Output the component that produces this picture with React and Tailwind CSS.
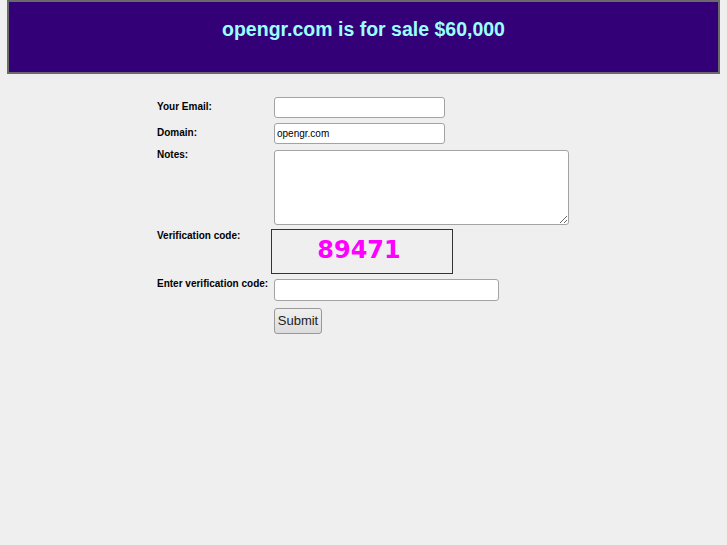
import { useState } from "react";

function Row({ label, labelClass = "pt-[2px]", children }) {
  return (
    <div className="flex">
      <div className={`w-[117px] shrink-0 text-[10px] font-bold text-black ${labelClass}`}>
        {label}
      </div>
      <div>{children}</div>
    </div>
  );
}

export default function App() {
  const [email, setEmail] = useState("");
  const [domain, setDomain] = useState("opengr.com");
  const [notes, setNotes] = useState("");
  const [code, setCode] = useState("");

  const inputCls =
    "block h-[21px] bg-white border border-[#a3a3a3] rounded-[3px] px-[2px] text-[10px] text-black outline-none";

  return (
    <div className="min-h-[545px] bg-[#efefef] font-['Liberation_Sans',Arial,sans-serif]">
      <div className="mx-[7px] h-[74px] border-2 border-[#6a6a6a] bg-[#330077] pt-[16px] text-center">
        <h1 className="text-[19.5px] leading-[22px] font-bold text-[#99ffff]">
          opengr.com is for sale $60,000
        </h1>
      </div>

      <form
        className="mx-auto mt-[23px] flex w-[413px] flex-col"
        onSubmit={(e) => e.preventDefault()}
      >
        <Row label="Your Email:" labelClass="pt-[2px]">
          <input
            className={`${inputCls} w-[171px]`}
            value={email}
            onChange={(e) => setEmail(e.target.value)}
          />
        </Row>
        <div className="h-[5px]" />
        <Row label="Domain:" labelClass="pt-[2px]">
          <input
            className={`${inputCls} w-[171px]`}
            value={domain}
            onChange={(e) => setDomain(e.target.value)}
          />
        </Row>
        <div className="h-[6px]" />
        <Row label="Notes:" labelClass="-mt-[3px]">
          <textarea
            className="block h-[75px] w-[295px] bg-white border border-[#a3a3a3] rounded-[3px] text-[10px] outline-none"
            value={notes}
            onChange={(e) => setNotes(e.target.value)}
          />
        </Row>
        <div className="h-[4px]" />
        <Row label="Verification code:" labelClass="-mt-[1px]">
          <div className="-ml-[3px] flex h-[45px] w-[182px] items-center justify-center border border-[#333333] bg-[#efefef] pr-[6px] pb-[4px]">
            <span className="font-['DejaVu_Sans',sans-serif] text-[24px] font-bold leading-none text-[#ff00ff]">
              89471
            </span>
          </div>
        </Row>
        <div className="h-[5px]" />
        <Row label="Enter verification code:" labelClass="-mt-[3px]">
          <input
            className={`${inputCls} h-[22px] w-[225px]`}
            value={code}
            onChange={(e) => setCode(e.target.value)}
          />
        </Row>
        <div className="h-[7px]" />
        <Row label="" labelClass="">
          <button
            type="submit"
            className="h-[26px] w-[48px] rounded-[3px] border border-[#999999] bg-gradient-to-b from-[#f0f0f0] to-[#dcdcdc] text-[13px] text-[#222222]"
          >
            Submit
          </button>
        </Row>
      </form>
    </div>
  );
}
